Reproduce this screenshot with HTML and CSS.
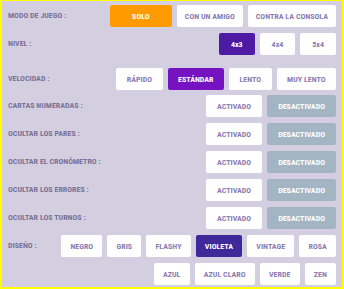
FILE: index.html
```html
<!DOCTYPE html>
<html lang="es">
<head>
<meta charset="utf-8">
<link rel="stylesheet" href="styles.css">
</head>
<body>
<div class="panel">
  <div class="row">
    <span class="label">Modo de juego :</span>
    <div class="opts">
      <button class="btn wide sel-orange solo">Solo</button>
      <button class="btn wide">Con un amigo</button>
      <button class="btn wide">Contra la consola</button>
    </div>
  </div>
  <div class="row nivel">
    <span class="label">Nivel :</span>
    <div class="opts">
      <button class="btn size sel-indigo">4x3</button>
      <button class="btn size">4x4</button>
      <button class="btn size">5x4</button>
    </div>
  </div>
  <div class="row velocidad">
    <span class="label">Velocidad :</span>
    <div class="opts">
      <button class="btn speed">Rápido</button>
      <button class="btn speed sel-purple">Estándar</button>
      <button class="btn speed">Lento</button>
      <button class="btn speed">Muy lento</button>
    </div>
  </div>
  <div class="row">
    <span class="label">Cartas numeradas :</span>
    <div class="opts">
      <button class="btn toggle">Activado</button>
      <button class="btn toggle off">Desactivado</button>
    </div>
  </div>
  <div class="row">
    <span class="label">Ocultar los pares :</span>
    <div class="opts">
      <button class="btn toggle">Activado</button>
      <button class="btn toggle off">Desactivado</button>
    </div>
  </div>
  <div class="row">
    <span class="label">Ocultar el cronómetro :</span>
    <div class="opts">
      <button class="btn toggle">Activado</button>
      <button class="btn toggle off">Desactivado</button>
    </div>
  </div>
  <div class="row">
    <span class="label">Ocultar los errores :</span>
    <div class="opts">
      <button class="btn toggle">Activado</button>
      <button class="btn toggle off">Desactivado</button>
    </div>
  </div>
  <div class="row">
    <span class="label">Ocultar los turnos :</span>
    <div class="opts">
      <button class="btn toggle">Activado</button>
      <button class="btn toggle off">Desactivado</button>
    </div>
  </div>
  <div class="row">
    <span class="label">Diseño :</span>
    <div class="opts-stack">
      <div class="opts">
        <button class="btn theme">Negro</button>
        <button class="btn theme">Gris</button>
        <button class="btn theme">Flashy</button>
        <button class="btn theme sel-violet">Violeta</button>
        <button class="btn theme">Vintage</button>
        <button class="btn theme">Rosa</button>
      </div>
      <div class="opts">
        <button class="btn theme">Azul</button>
        <button class="btn theme">Azul claro</button>
        <button class="btn theme">Verde</button>
        <button class="btn theme">Zen</button>
      </div>
    </div>
  </div>
</div>
</body>
</html>
```
FILE: styles.css
```css
html, body {
  margin: 0;
  height: 100%;
}
body {
  background: #d3cee0;
  font-family: "Roboto Condensed", Roboto, "Liberation Sans", sans-serif;
  font-weight: 700;
  font-size: 8px;
}
.panel {
  box-sizing: border-box;
  height: 100vh;
  border: 2px solid #ffff00;
  border-top-width: 1px;
  padding: 4px 6px 0 6px;
  display: flex;
  flex-direction: column;
  gap: 6px;
}
.row {
  display: flex;
  align-items: flex-start;
}
.nivel { margin-bottom: 7px; }
.velocidad { margin-bottom: -1px; }
.label {
  text-transform: uppercase;
  color: #7a7298;
  line-height: 22px;
  white-space: nowrap;
  padding-right: 8px;
}
.opts {
  flex: 1;
  display: flex;
  justify-content: flex-end;
  gap: 5px;
}
.opts-stack {
  flex: 1;
  display: flex;
  flex-direction: column;
  gap: 6px;
}
.btn {
  font: inherit;
  text-transform: uppercase;
  height: 22px;
  padding: 0 10px;
  border: 0;
  border-radius: 2px;
  background: #ffffff;
  color: #8a7cb2;
  white-space: nowrap;
  cursor: pointer;
}
.btn.wide { padding: 0 8px; }
.btn.solo { min-width: 62px; }
.btn.size { text-transform: none; padding: 0 12px; }
.btn.speed { padding: 0 10.5px; }
.btn.toggle { padding: 0 11px; }
.btn.theme { padding: 0 9.2px; }
.btn.off {
  background: #a3b5c3;
  color: #ffffff;
}
.sel-orange { background: #ff9a00; color: #ffffff; }
.sel-indigo { background: #4c1aa3; color: #ffffff; }
.sel-purple { background: #7613c0; color: #ffffff; }
.sel-violet { background: #3f289a; color: #ffffff; }
```
